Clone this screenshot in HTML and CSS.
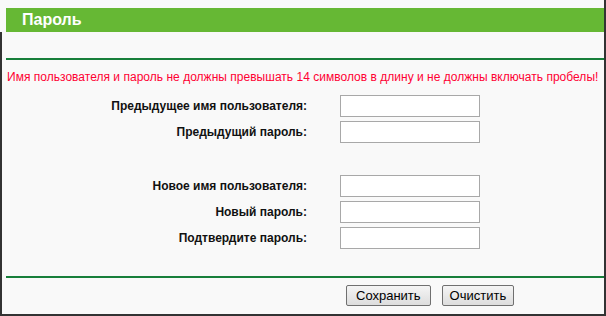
FILE: index.html
```html
<!DOCTYPE html>
<html lang="ru">
<head>
<meta charset="utf-8">
<title>Пароль</title>
<link rel="stylesheet" href="styles.css">
</head>
<body>
<div class="page">
  <div class="header"><span class="title">Пароль</span></div>
  <div class="panel">
    <div class="line line-top"></div>
    <p class="warning">Имя пользователя и пароль не должны превышать 14 символов в длину и не должны включать пробелы!</p>
    <form class="form">
      <label class="label" for="oldname">Предыдущее имя пользователя:</label>
      <input class="field" id="oldname" type="text">
      <label class="label" for="oldpwd">Предыдущий пароль:</label>
      <input class="field" id="oldpwd" type="password">
      <div class="spacer"></div>
      <label class="label" for="newname">Новое имя пользователя:</label>
      <input class="field" id="newname" type="text">
      <label class="label" for="newpwd">Новый пароль:</label>
      <input class="field" id="newpwd" type="password">
      <label class="label" for="confirm">Подтвердите пароль:</label>
      <input class="field" id="confirm" type="password">
    </form>
    <div class="line line-bottom"></div>
    <div class="actions">
      <button class="btn btn-save" type="button">Сохранить</button>
      <button class="btn btn-clear" type="button">Очистить</button>
    </div>
  </div>
</div>
</body>
</html>
```

FILE: styles.css
```css
html, body {
  margin: 0;
  padding: 0;
  background: #f9f9f9;
}

body {
  font-family: "Liberation Sans", Arial, sans-serif;
}

.page {
  width: 606px;
  height: 316px;
  box-sizing: border-box;
  border-right: 2px solid #333333;
  padding-top: 8px;
  display: flex;
  flex-direction: column;
  background: #f9f9f9;
}

.header {
  margin-left: 6px;
  height: 24px;
  background: #66b834;
  display: flex;
  align-items: center;
}

.title {
  padding-left: 16px;
  color: #ffffff;
  font-size: 16px;
  font-weight: bold;
  line-height: 24px;
}

.panel {
  flex: 1;
  border-left: 2px solid #333333;
  border-bottom: 2px solid #333333;
  display: flex;
  flex-direction: column;
}

.line {
  height: 2px;
  margin-left: 4px;
  background: #177f3a;
}

.line-top {
  margin-top: 26px;
}

.warning {
  margin: 9px 0 0 5px;
  font-size: 12px;
  line-height: 16px;
  color: #ff0033;
  white-space: nowrap;
  letter-spacing: 0.02px;
}

.form {
  margin-top: 10px;
  display: grid;
  grid-template-columns: 305px 140px;
  column-gap: 33px;
  row-gap: 4px;
  align-items: center;
}

.label {
  text-align: right;
  font-size: 12px;
  font-weight: bold;
  color: #111111;
}

.field {
  box-sizing: border-box;
  width: 140px;
  height: 22px;
  margin: 0;
  border: 1px solid #a8a8a8;
  background: #ffffff;
  padding: 0 3px;
}

.spacer {
  grid-column: 1 / 3;
  height: 24px;
}

.line-bottom {
  margin-top: 27px;
}

.actions {
  margin-top: 7px;
  padding-left: 344px;
  display: flex;
  gap: 11px;
}

.btn {
  height: 21px;
  font-family: "Liberation Sans", Arial, sans-serif;
  font-size: 13px;
  color: #000000;
  background: linear-gradient(#f5f5f5, #dddddd);
  border: 1px solid #707070;
  border-radius: 2px;
  line-height: 19px;
}

.btn-save {
  padding: 0 9px;
}

.btn-clear {
  padding: 0 7px;
}
```
